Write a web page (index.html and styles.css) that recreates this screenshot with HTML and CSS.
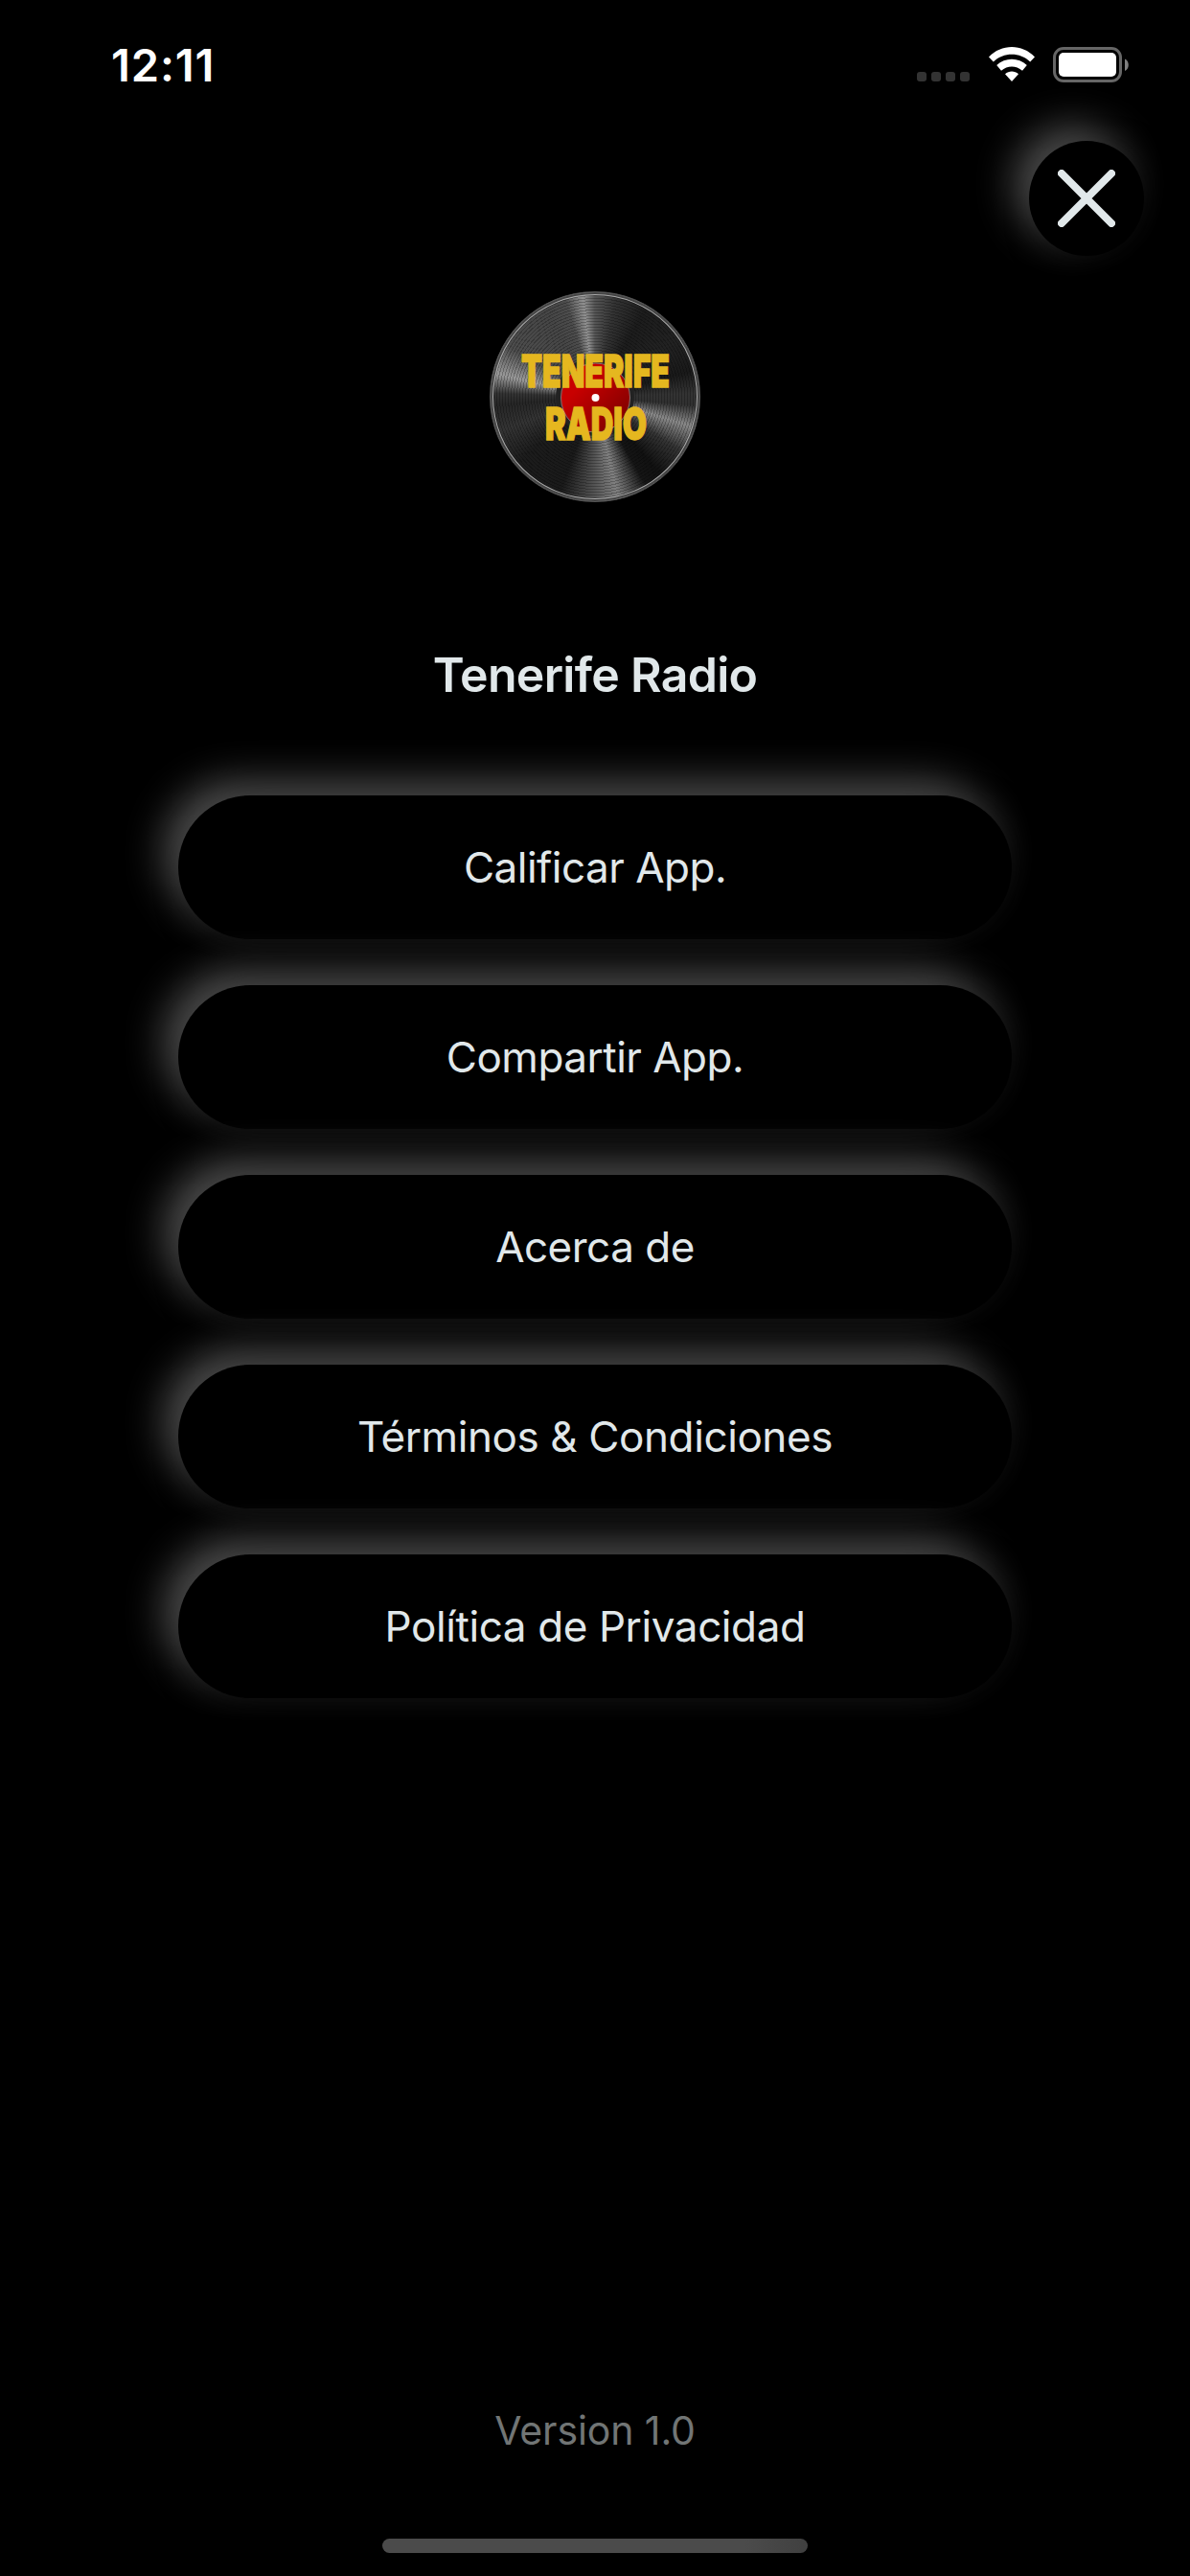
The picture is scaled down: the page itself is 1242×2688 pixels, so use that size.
FILE: index.html
```html
<!DOCTYPE html>
<html lang="es">
<head>
    <meta charset="UTF-8">
    <meta name="viewport" content="width=device-width, initial-scale=1.0">
    <title>Tenerife Radio</title>
    <link rel="stylesheet" href="styles.css">
</head>
<body>
    <div class="status-bar">
        <span class="time">12:11</span>
        <div class="status-icons">
            <div class="signal"><i></i><i></i><i></i><i></i></div>
            <svg class="wifi" width="48" height="37" viewBox="0 0 48 37">
                <path d="M0 10.5C13-3.5 35-3.5 48 10.5L43.2 15.5C32.5 5.2 15.500 5.2 4.800 15.500Z"/>
                <path d="M8.200 19C17.200 10.500 30.800 10.500 39.800 19L35 24.800C28.500 19 19.500 19 13 24.800Z"/>
                <path d="M17 28.300C21 24.700 27 24.700 31 28.300L24 36Z"/>
            </svg>
            <svg class="battery" width="80" height="37" viewBox="0 0 80 37">
                <rect x="1.500" y="1.500" width="69" height="34" rx="9.500" fill="none" stroke="#666" stroke-width="3"/>
                <rect x="6" y="6" width="60" height="25" rx="5" fill="#fff"/>
                <path d="M75 12.500C80 14.500 80 23 75 25Z" fill="#808080"/>
            </svg>
        </div>
    </div>
    <div class="top">
        <button class="close" aria-label="Cerrar">
            <svg width="60" height="60" viewBox="0 0 60 60">
                <path d="M4 4L56 56M56 4L4 56"/>
            </svg>
        </button>
    </div>
    <div class="logo">
        <svg width="220" height="220" viewBox="0 0 220 220">
            <defs>
                <linearGradient id="label" x1="0" y1="0" x2="1" y2="1">
                    <stop offset="0.300" stop-color="#c80000"/>
                    <stop offset="1" stop-color="#700000"/>
                </linearGradient>
            </defs>
            <circle cx="110" cy="110" r="41" fill="#222"/>
            <circle cx="110.500" cy="111" r="36" fill="url(#label)" stroke="#8a7070"/>
            <circle cx="110.500" cy="111" r="4" fill="#fff"/>
            <text x="33" y="100" textLength="155" lengthAdjust="spacingAndGlyphs">TENERIFE</text>
            <text x="58" y="155" textLength="106" lengthAdjust="spacingAndGlyphs">RADIO</text>
        </svg>
    </div>
    <h1>Tenerife Radio</h1>
    <div class="menu">
        <button class="item">Calificar App.</button>
        <button class="item">Compartir App.</button>
        <button class="item">Acerca de</button>
        <button class="item long">Términos &amp; Condiciones</button>
        <button class="item long">Política de Privacidad</button>
    </div>
    <p class="version">Version 1.0</p>
    <div class="home-bar"></div>
</body>
</html>
```
FILE: styles.css
```css
* {
    box-sizing: border-box;
}
body {
    margin: 0;
    height: 2688px;
    background: #000;
    color: #e1e8ea;
    font-family: Inter, sans-serif;
    display: flex;
    flex-direction: column;
    align-items: center;
}
button {
    padding: 0;
    border: none;
    background: #000;
    color: inherit;
    font-family: inherit;
    cursor: pointer;
}
.status-bar {
    width: 100%;
    height: 132px;
    padding: 0 63px 0 116px;
    display: flex;
    justify-content: space-between;
}
.time {
    margin-top: 40px;
    color: #fff;
    font-size: 47px;
    font-weight: 600;
    line-height: 56px;
    letter-spacing: 0.9px;
}
.status-icons {
    display: flex;
    margin-top: 49px;
    height: 37px;
    align-items: flex-end;
}
.signal {
    display: flex;
    gap: 5px;
    margin: 0 20px 1px 0;
}
.signal i {
    width: 10px;
    height: 10px;
    border-radius: 3px;
    background: #333;
}
.wifi {
    fill: #fff;
    margin-right: 19px;
}
.top {
    width: 100%;
    padding: 15px 48px 0 0;
    display: flex;
    justify-content: flex-end;
}
.close, .item {
    box-shadow: 15px 15px 40px rgba(0, 0, 0, 0.4), -15px -15px 40px rgba(255, 255, 255, 0.31);
}
.close {
    width: 120px;
    height: 120px;
    border-radius: 50%;
    display: flex;
    align-items: center;
    justify-content: center;
}
.close path {
    fill: none;
    stroke: #e1e8ea;
    stroke-width: 8;
    stroke-linecap: round;
}
.logo {
    width: 220px;
    height: 220px;
    margin-top: 37px;
    border-radius: 50%;
    border: 1px solid #555;
    box-shadow: inset 0 0 0 2px #444, inset 0 0 0 3px #aaa;
    background:
        repeating-radial-gradient(circle, rgba(0, 0, 0, 0.25) 0 1px, transparent 1px 3px),
        conic-gradient(#555 0deg, #333 12deg, #1c1c1c 30deg, #222 55deg, #191919 75deg, #333 88deg, #303030 95deg, #888 107deg, #333 122deg, #111 140deg, #151515 150deg, #808080 167deg, #555 180deg, #1a1a1a 200deg, #1c1c1c 230deg, #333 250deg, #262626 265deg, #333 272deg, #999 283deg, #4c4c4c 300deg, #454545 330deg, #4c4c4c 343deg, #909090 353deg, #555 360deg);
}
.logo svg {
    display: block;
    margin: -1px;
    overflow: visible;
}
.logo text {
    font-family: Inter, sans-serif;
    font-size: 47px;
    font-weight: 900;
    fill: #e5b71f;
    stroke: #e5b71f;
    stroke-width: 1.4;
}
h1 {
    margin: 150px 0 0;
    font-size: 50px;
    font-weight: 600;
    line-height: 60px;
    letter-spacing: -0.7px;
}
.menu {
    margin-top: 96px;
    width: 870px;
    display: flex;
    flex-direction: column;
    gap: 48px;
}
.item {
    height: 150px;
    border-radius: 75px;
    font-size: 44px;
    letter-spacing: -0.5px;
}
.long {
    letter-spacing: -0.4px;
}
.version {
    margin: auto 0 0;
    color: #717575;
    font-size: 41px;
    line-height: 50px;
    letter-spacing: -0.1px;
}
.home-bar {
    width: 444px;
    height: 15px;
    margin: 88px 0 24px;
    border-radius: 8px;
    background: linear-gradient(90deg, #4b4b4b 85%, #404040);
}
```
